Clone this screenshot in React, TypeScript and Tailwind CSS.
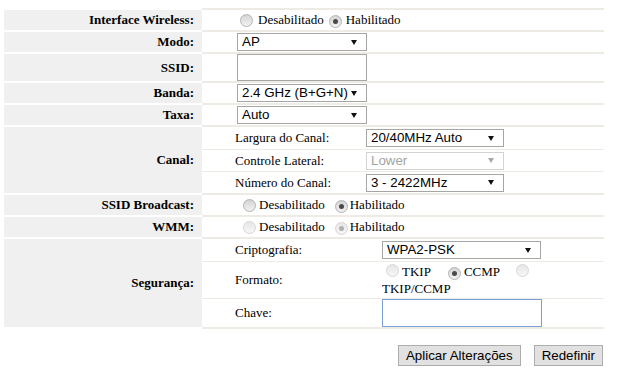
import React from 'react';

function Radio({ checked = false, disabled = false }: { checked?: boolean; disabled?: boolean }) {
  return (
    <span
      className={
        disabled
          ? 'inline-flex w-[13px] h-[13px] shrink-0 items-center justify-center rounded-full border border-[#d6d6d6] bg-linear-to-b from-[#e6e6e6] to-[#f7f7f7]'
          : 'inline-flex w-[13px] h-[13px] shrink-0 items-center justify-center rounded-full border border-[#b4b4b4] bg-linear-to-b from-[#d4d4d4] to-[#f2f2f2]'
      }
    >
      {checked && (
        <span
          className={
            disabled
              ? 'w-[5px] h-[5px] rounded-full bg-[#b0b0b0]'
              : 'w-[5px] h-[5px] rounded-full bg-[#4a4a4a]'
          }
        />
      )}
    </span>
  );
}

function Select({ value, width, disabled = false }: { value: string; width: string; disabled?: boolean }) {
  return (
    <div
      className={`${width} h-[18px] flex items-center justify-between bg-white pl-[4px] pr-[9px] font-['Liberation_Sans',Arial,sans-serif] text-[13.33px] leading-none ${
        disabled ? 'border border-[#d3d3d3] text-[#a3a3a3]' : 'border border-[#a6a6a6] text-black'
      }`}
    >
      <span>{value}</span>
      <svg width="6" height="5" viewBox="0 0 6 5">
        <polygon points="0,0 6,0 3,5" fill={disabled ? '#a8a8a8' : '#111111'} />
      </svg>
    </div>
  );
}

function Row({
  label,
  height,
  last = false,
  children,
}: {
  label: string;
  height: string;
  last?: boolean;
  children: React.ReactNode;
}) {
  return (
    <div className={`flex ${height}`}>
      <div
        className={`w-[198px] shrink-0 flex items-center justify-end pr-[8px] bg-[#f0f0f0] border-t-2 border-white font-bold ${
          last ? 'border-b-2' : ''
        }`}
      >
        {label}
      </div>
      <div className={`flex-1 border-t-2 border-[#edebe4] ${last ? 'border-b-2' : ''}`}>{children}</div>
    </div>
  );
}

export default function App() {
  return (
    <div className="w-[639px] h-[386px] bg-white pt-[8px] pl-[4px] font-['Liberation_Serif','Times_New_Roman',serif] text-[13px] text-black">
      <div className="w-[600px]">
        <Row label="Interface Wireless:" height="h-[22px]">
          <div className="h-full flex items-center pl-[38px]">
            <Radio />
            <span className="ml-[5px]">Desabilitado</span>
            <span className="ml-[5px]"><Radio checked /></span>
            <span className="ml-[4px]">Habilitado</span>
          </div>
        </Row>
        <Row label="Modo:" height="h-[22px]">
          <div className="h-full flex items-center pl-[35px]">
            <Select value="AP" width="w-[130px]" />
          </div>
        </Row>
        <Row label="SSID:" height="h-[29px]">
          <div className="h-full flex items-center pl-[35px]">
            <input className="w-[130px] h-[27px] border border-[#a6a6a6] bg-white outline-none" />
          </div>
        </Row>
        <Row label="Banda:" height="h-[22px]">
          <div className="h-full flex items-center pl-[35px]">
            <Select value="2.4 GHz (B+G+N)" width="w-[130px]" />
          </div>
        </Row>
        <Row label="Taxa:" height="h-[22px]">
          <div className="h-full flex items-center pl-[35px]">
            <Select value="Auto" width="w-[130px]" />
          </div>
        </Row>
        <Row label="Canal:" height="h-[68px]">
          <div className="flex flex-col">
            <div className="h-[22px] flex items-center pl-[33px]">
              <span className="w-[131px]">Largura do Canal:</span>
              <Select value="20/40MHz Auto" width="w-[138px]" />
            </div>
            <div className="h-[22px] flex items-center pl-[33px] border-t border-[#edebe4]">
              <span className="w-[131px]">Controle Lateral:</span>
              <Select value="Lower" width="w-[138px]" disabled />
            </div>
            <div className="h-[22px] flex items-center pl-[33px] border-t border-[#edebe4]">
              <span className="w-[131px]">Número do Canal:</span>
              <Select value="3 - 2422MHz" width="w-[138px]" />
            </div>
          </div>
        </Row>
        <Row label="SSID Broadcast:" height="h-[22px]">
          <div className="h-full flex items-center pl-[41px]">
            <Radio />
            <span className="ml-[3px]">Desabilitado</span>
            <span className="ml-[10px]"><Radio checked /></span>
            <span className="ml-[2px]">Habilitado</span>
          </div>
        </Row>
        <Row label="WMM:" height="h-[22px]">
          <div className="h-full flex items-center pl-[41px]">
            <Radio disabled />
            <span className="ml-[3px]">Desabilitado</span>
            <span className="ml-[10px]"><Radio checked disabled /></span>
            <span className="ml-[2px]">Habilitado</span>
          </div>
        </Row>
        <Row label="Segurança:" height="h-[92px]" last>
          <div className="flex flex-col">
            <div className="h-[22px] flex items-center pl-[33px]">
              <span className="w-[147px]">Criptografia:</span>
              <Select value="WPA2-PSK" width="w-[159px]" />
            </div>
            <div className="h-[37px] flex items-center pl-[33px] border-t border-[#edebe4]">
              <span className="w-[147px]">Formato:</span>
              <div className="flex flex-col leading-[16px]">
                <div className="flex items-center">
                  <span className="ml-[4px]"><Radio disabled /></span>
                  <span className="ml-[3px]">TKIP</span>
                  <span className="ml-[17px]"><Radio checked /></span>
                  <span className="ml-[3px]">CCMP</span>
                  <span className="ml-[16px]"><Radio disabled /></span>
                </div>
                <span>TKIP/CCMP</span>
              </div>
            </div>
            <div className="h-[29px] flex items-center pl-[33px] border-t border-[#edebe4]">
              <span className="w-[147px]">Chave:</span>
              <input className="w-[160px] h-[28px] border border-[#7b9fd2] bg-white outline-none" />
            </div>
          </div>
        </Row>
        <div className="flex justify-end gap-[13px] pr-[1px] mt-[16px] font-['Liberation_Sans',Arial,sans-serif] text-[13.33px]">
          <button className="h-[21px] px-[7px] border border-[#adadad] bg-[#e1e1e1] leading-none">Aplicar Alterações</button>
          <button className="h-[21px] px-[7px] border border-[#adadad] bg-[#e1e1e1] leading-none">Redefinir</button>
        </div>
      </div>
    </div>
  );
}
